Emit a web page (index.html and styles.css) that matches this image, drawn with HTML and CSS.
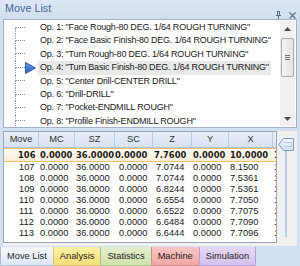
FILE: index.html
```html
<!DOCTYPE html>
<html>
<head>
<meta charset="utf-8">
<link rel="stylesheet" href="styles.css">
</head>
<body>
<div class="app">
  <div class="titlebar">
    <span class="title">Move List</span>
    <span class="tools">
      <svg class="pin" width="7" height="8" viewBox="0 0 7 8"><path d="M2 0.5h3M2.5 0.5v4M4.5 0.5v4M1 4.5h5M3.5 4.5v3.5" stroke="#5a7396" stroke-width="1" fill="none"/></svg>
      <svg class="close" width="7" height="7" viewBox="0 0 7 7"><path d="M0.5 0.5l6 6M6.5 0.5l-6 6" stroke="#5a7396" stroke-width="1.3" fill="none"/></svg>
    </span>
  </div>

  <div class="tree-panel">
    <div class="tree">
      <div class="row first"><span class="indent"></span><span class="guide"><span class="g1"></span><span class="g2"></span></span><span class="icon"></span><span class="label">Op. 1: "Face Rough-80 DEG. 1/64 ROUGH TURNING"</span></div>
      <div class="row"><span class="indent"></span><span class="guide"><span class="g1"></span><span class="g2"></span></span><span class="icon"></span><span class="label">Op. 2: "Face Basic Finish-80 DEG. 1/64 ROUGH TURNING"</span></div>
      <div class="row"><span class="indent"></span><span class="guide"><span class="g1"></span><span class="g2"></span></span><span class="icon"></span><span class="label">Op. 3: "Turn Rough-80 DEG. 1/64 ROUGH TURNING"</span></div>
      <div class="row current"><span class="indent"></span><span class="guide"><span class="g1"></span><span class="g2"></span></span><span class="icon"><svg width="11" height="12" viewBox="0 0 11 12"><defs><linearGradient id="ag" x1="0" y1="0" x2="0" y2="1"><stop offset="0" stop-color="#6aa0e6"/><stop offset="1" stop-color="#2a62b8"/></linearGradient></defs><path d="M0.5 0.5L10.5 6L0.5 11.5Z" fill="url(#ag)" stroke="#2b5ea8" stroke-width="1"/></svg></span><span class="label">Op. 4: "Turn Basic Finish-80 DEG. 1/64 ROUGH TURNING"</span></div>
      <div class="row"><span class="indent"></span><span class="guide"><span class="g1"></span><span class="g2"></span></span><span class="icon"></span><span class="label">Op. 5: "Center Drill-CENTER DRILL"</span></div>
      <div class="row"><span class="indent"></span><span class="guide"><span class="g1"></span><span class="g2"></span></span><span class="icon"></span><span class="label">Op. 6: "Drill-DRILL"</span></div>
      <div class="row"><span class="indent"></span><span class="guide"><span class="g1"></span><span class="g2"></span></span><span class="icon"></span><span class="label">Op. 7: "Pocket-ENDMILL ROUGH"</span></div>
      <div class="row"><span class="indent"></span><span class="guide"><span class="g1"></span><span class="g2"></span></span><span class="icon"></span><span class="label">Op. 8: "Profile Finish-ENDMILL ROUGH"</span></div>
    </div>
    <div class="vscroll">
      <div class="sb-btn"><svg width="7" height="4" viewBox="0 0 7 4"><path d="M0 4L3.5 0L7 4Z" fill="#4d4d4d"/></svg></div>
      <div class="sb-thumb"><i></i><i></i><i></i></div>
      <div class="sb-track"></div>
      <div class="sb-btn"><svg width="7" height="4" viewBox="0 0 7 4"><path d="M0 0L3.5 4L7 0Z" fill="#4d4d4d"/></svg></div>
    </div>
  </div>

  <div class="lower">
    <div class="grid">
      <div class="hdr"><span>Move</span><span>MC</span><span>SZ</span><span>SC</span><span>Z</span><span>Y</span><span>X</span><span></span></div>
      <div class="r cur"><span>106</span><span>0.0000</span><span>36.0000</span><span>0.0000</span><span>7.7600</span><span>0.0000</span><span>10.0000</span><span>1</span></div>
      <div class="r"><span>107</span><span>0.0000</span><span>36.0000</span><span>0.0000</span><span>7.0744</span><span>0.0000</span><span>8.1500</span><span>1</span></div>
      <div class="r"><span>108</span><span>0.0000</span><span>36.0000</span><span>0.0000</span><span>7.0744</span><span>0.0000</span><span>7.5361</span><span>1</span></div>
      <div class="r"><span>109</span><span>0.0000</span><span>36.0000</span><span>0.0000</span><span>6.8244</span><span>0.0000</span><span>7.5361</span><span>1</span></div>
      <div class="r"><span>110</span><span>0.0000</span><span>36.0000</span><span>0.0000</span><span>6.6554</span><span>0.0000</span><span>7.7050</span><span>1</span></div>
      <div class="r"><span>111</span><span>0.0000</span><span>36.0000</span><span>0.0000</span><span>6.6522</span><span>0.0000</span><span>7.7075</span><span>1</span></div>
      <div class="r"><span>112</span><span>0.0000</span><span>36.0000</span><span>0.0000</span><span>6.6484</span><span>0.0000</span><span>7.7090</span><span>1</span></div>
      <div class="r"><span>113</span><span>0.0000</span><span>36.0000</span><span>0.0000</span><span>6.6444</span><span>0.0000</span><span>7.7096</span><span>1</span></div>
    </div>
    <div class="slider">
      <svg class="handle" width="16" height="13" viewBox="0 0 16 13"><defs><linearGradient id="hg" x1="0" y1="0" x2="0" y2="1"><stop offset="0" stop-color="#f3f7fd"/><stop offset="1" stop-color="#d3e1f3"/></linearGradient></defs><path d="M0.8 6.5L5.5 0.5H15.5V12.5H5.5Z" fill="url(#hg)" stroke="#7d98bf" stroke-width="1"/><path d="M6 4.5H13.5V8.5H6" fill="none" stroke="#b3c6e2" stroke-width="1"/></svg>
      <div class="track"></div>
    </div>
  </div>

  <div class="tabs">
    <div class="tab t-move">Move List</div>
    <div class="tab t-analysis">Analysis</div>
    <div class="tab t-stats">Statistics</div>
    <div class="tab t-machine">Machine</div>
    <div class="tab t-sim">Simulation</div>
  </div>
</div>
</body>
</html>
```
FILE: styles.css
```css
* { box-sizing: border-box; }
html, body { margin: 0; padding: 0; }
body {
  width: 300px;
  height: 266px;
  overflow: hidden;
  background: #d3e0f1;
  font-family: "Liberation Sans", Arial, sans-serif;
  font-size: 9.3px;
  color: #1b1b1b;
}
.app { display: flex; flex-direction: column; height: 266px; }

/* title bar */
.titlebar {
  height: 19px;
  display: flex;
  justify-content: space-between;
  align-items: flex-start;
  padding: 2px 4px 0 5px;
  background: linear-gradient(#dce7f5, #d1deef);
}
.title { font-size: 10.8px; line-height: 12px; color: #46679a; }
.tools { display: flex; gap: 7px; margin-top: 9px; align-items: center; }
.tools svg { display: block; }

/* tree panel */
.tree-panel {
  height: 109px;
  margin: 0 3px;
  border: 1px solid #a3b3c9;
  background: #fff;
  display: flex;
}
.tree { flex: 1; padding-top: 1px; overflow: hidden; min-width: 0; }
.row { height: 13.4px; display: flex; white-space: nowrap; }
.indent { width: 11px; flex: none; }
.guide { width: 10px; flex: none; display: flex; flex-direction: column; }
.g1 { height: 50%; border-left: 1px dotted #9a9a9a; border-bottom: 1px dotted #9a9a9a; }
.g2 { flex: 1; border-left: 1px dotted #9a9a9a; }
.first .g1 { border-left-color: transparent; }
.icon { width: 11px; flex: none; display: flex; align-items: center; }
.icon svg { display: block; }
.label {
  margin-left: 2px;
  padding: 0 2px;
  line-height: 13.4px;
  font-size: 9px;
  letter-spacing: -0.2px;
  color: #1a1a1a;
}
.current .label { background: #e9e9e9; }

/* tree scrollbar */
.vscroll {
  width: 15px;
  flex: none;
  margin: 1px 1px 1px 0;
  background: #f0f0f0;
  display: flex;
  flex-direction: column;
}
.sb-btn { height: 15px; display: flex; align-items: center; justify-content: center; }
.sb-btn svg { display: block; }
.sb-thumb {
  height: 39px;
  margin: 2px 1px 0;
  border: 1px solid #adadad;
  border-radius: 2px;
  background: linear-gradient(90deg, #f4f4f4, #e3e3e3);
  display: flex;
  flex-direction: column;
  justify-content: center;
  align-items: center;
  gap: 1px;
}
.sb-thumb i { display: block; width: 5px; height: 1px; background: #6e6e6e; }
.sb-track { flex: 1; }

/* lower panel */
.lower {
  height: 115px;
  margin: 3px 3px 0;
  display: flex;
  background: #f0f0f0;
}
.grid {
  width: 274px;
  height: 112px;
  flex: none;
  border: 1px solid #99a6b7;
  background: #fff;
  overflow: hidden;
}
.hdr, .r {
  display: grid;
  grid-template-columns: 35px 36px 40px 38px 39px 37px 44px 40px;
  white-space: nowrap;
}
.hdr {
  height: 16px;
  background: linear-gradient(#e9f0f9, #d5e1f1);
  border-bottom: 1px solid #b3c3d8;
}
.hdr span {
  border-right: 1px solid #bccbde;
  text-align: center;
  line-height: 15px;
  color: #333;
}
.r { height: 11px; line-height: 11px; }
.r span { padding-left: 1px; overflow: hidden; }
.r span:nth-child(1) { padding-left: 15px; }
.r span:nth-child(4) { padding-left: 4px; }
.r span:nth-child(5) { padding-left: 3px; }
.r.cur {
  height: 14px;
  line-height: 12px;
  border-top: 1px solid #f1c064;
  border-bottom: 1px solid #f1c064;
  background: linear-gradient(#fffaf1, #fcefd9);
  font-family: "DejaVu Sans", sans-serif;
  font-weight: bold;
  font-size: 8.4px;
}
.r.cur span:nth-child(1) { padding-left: 14px; }
.r.cur span:nth-child(4) { padding-left: 0; }
.r.cur span:nth-child(5) { padding-left: 1px; }

/* slider */
.slider {
  flex: 1;
  display: flex;
  flex-direction: column;
  align-items: center;
  padding: 7px 2px 0 0;
}
.handle { display: block; flex: none; }
.track { width: 2px; flex: 1; background: #b9cde8; margin-bottom: 9px; }

/* tabs */
.tabs { display: flex; height: 19px; margin-top: 1px; }
.tab {
  padding: 0 6px;
  line-height: 18px;
  border: 1px solid;
  border-top: none;
  margin-right: -1px;
  border-radius: 0 0 2px 2px;
  color: #1f1f1f;
  white-space: nowrap;
}
.t-move { background: linear-gradient(#f5f9fe, #dce7f5); border-color: #a9bad1; }
.t-analysis { background: linear-gradient(#fdf0a6, #f8de76); border-color: #d8c172; }
.t-stats { background: linear-gradient(#e3efcd, #cfe1ad); border-color: #a9c088; }
.t-machine { background: linear-gradient(#f8c6c2, #f1a8a3); border-color: #d18d88; }
.t-sim { background: linear-gradient(#e5d8f6, #d3c1ef); border-color: #b29fd5; }
```
